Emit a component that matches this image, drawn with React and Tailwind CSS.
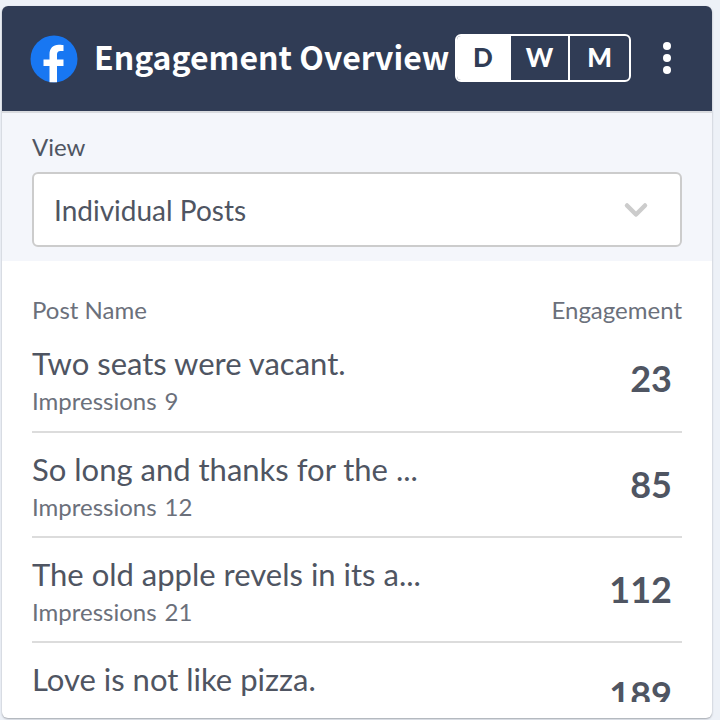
import { ChevronDown } from 'lucide-react';

const posts = [
  { id: 1, name: 'Two seats were vacant.', impressions: 9, engagement: 23 },
  { id: 2, name: 'So long and thanks for the ...', impressions: 12, engagement: 85 },
  { id: 3, name: 'The old apple revels in its a...', impressions: 21, engagement: 112 },
  { id: 4, name: 'Love is not like pizza.', engagement: 189 },
];

const ranges = ['D', 'W', 'M'];

function FacebookLogo() {
  return (
    <svg viewBox="0 0 48 48" className="h-12 w-12 shrink-0" aria-hidden="true">
      <circle cx="24" cy="24" r="23.5" fill="#1877f2" />
      <path
        fill="#fff"
        d="M19.5 47.3V31h-6v-6.500h6V19.500c0-6.200 3.500-9.700 9.200-9.700 2.500 0 4.800.4 4.800.4v5.800h-3c-2.600 0-3.500 1.600-3.500 3.500v5H33.500V31H27v16.300z"
      />
    </svg>
  );
}

export default function App() {
  return (
    <div className="h-screen overflow-hidden bg-[#edf1f7] pt-1.5 pr-2 pb-0.5 pl-0.5 font-['Lato',sans-serif] text-[#4f5562]">
      <div className="flex h-full flex-col overflow-hidden rounded-md bg-white shadow-[0_1px_2px_0_#a0a4ab]">
        <header className="flex h-[107px] shrink-0 items-center border-b-2 border-[#d9dbdf] bg-[#303c55] pr-[41px] pl-7 text-white">
          <FacebookLogo />
          <div className="ml-4 flex flex-1 items-center pb-0.5">
            <h1 className="flex-1 whitespace-nowrap pb-1 font-['Noto_Sans_CJK_SC',sans-serif] text-[32px] leading-10 font-bold">
              Engagement Overview
            </h1>
            <div className="flex shrink-0 divide-x-2 divide-white overflow-hidden rounded-md border-2 border-white">
              {ranges.map((range) => (
                <button
                  key={range}
                  type="button"
                  className={
                    range === 'D'
                      ? 'h-11 w-[54px] bg-white text-[26px] font-black text-[#303c55]'
                      : 'h-11 w-[59px] text-[26px] font-black'
                  }
                >
                  {range}
                </button>
              ))}
            </div>
            <button type="button" aria-label="More options" className="ml-8 shrink-0">
              <svg viewBox="0 0 8 32" className="h-8 w-2" fill="currentColor">
                <circle cx="4" cy="4" r="4" />
                <circle cx="4" cy="16" r="4" />
                <circle cx="4" cy="28" r="4" />
              </svg>
            </button>
          </div>
        </header>

        <section className="h-[148px] shrink-0 bg-[#f4f6fb] px-[30px] pt-5">
          <label htmlFor="view" className="block text-2xl leading-7">
            View
          </label>
          <div className="relative mt-[11px]">
            <select
              id="view"
              className="h-[75px] w-full appearance-none rounded-md border-2 border-[#cccccc] bg-white px-5 text-[28px]"
            >
              <option>Individual Posts</option>
            </select>
            <ChevronDown
              className="pointer-events-none absolute top-5 right-7 h-9 w-9 text-[#cccccc]"
              strokeWidth={3}
            />
          </div>
        </section>

        <section className="mb-4 min-h-0 flex-1 overflow-hidden px-[30px] pt-[33px]">
          <table className="w-full">
            <thead>
              <tr className="h-[33px] align-top text-2xl leading-8 text-[#6b707b]">
                <th className="text-left font-normal">Post Name</th>
                <th className="text-right font-normal">Engagement</th>
              </tr>
            </thead>
            <tbody>
              {posts.map((post) => (
                <tr key={post.id} className="h-[105px] border-b-2 border-[#dcdcdc] align-top last:border-0">
                  <td className="pt-4">
                    <p className="text-[31px] leading-10">{post.name}</p>
                    {post.impressions && (
                      <p className="flex gap-2 text-2xl leading-9 text-[#6b707b]">
                        <span>Impressions</span>
                        <span>{post.impressions}</span>
                      </p>
                    )}
                  </td>
                  <td className="pt-[31px] pr-2.5 text-right text-4xl leading-10 font-bold">{post.engagement}</td>
                </tr>
              ))}
            </tbody>
          </table>
        </section>
      </div>
    </div>
  );
}
